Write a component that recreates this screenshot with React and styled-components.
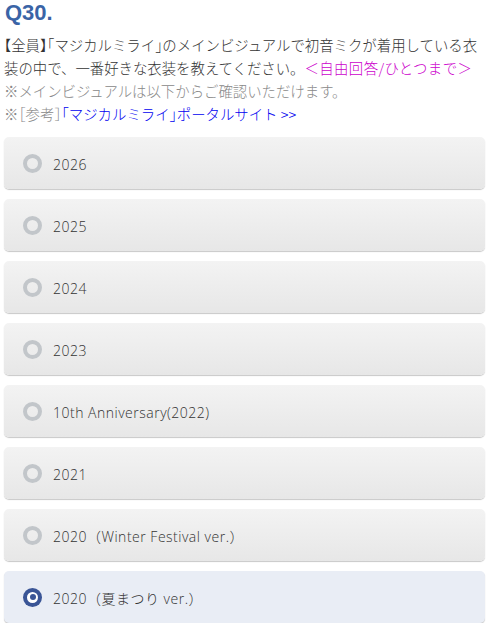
import React, { useState } from "react";
import styled, { createGlobalStyle } from "styled-components";

const GlobalStyle = createGlobalStyle`
  html, body { margin: 0; padding: 0; background: #fff; }
  body { font-family: "Noto Sans CJK JP", "Noto Sans", sans-serif; font-weight: 300; }
  * { box-sizing: border-box; }
`;

const Page = styled.div`
  padding: 0 8px 0 4px;
  width: 493px;
`;

const Heading = styled.h2`
  margin: 0;
  font-family: "Liberation Sans", Arial, sans-serif;
  font-weight: bold;
  font-size: 22px;
  line-height: 26px;
  color: #3a64a6;
  padding-left: 1px;
`;

const Question = styled.div`
  margin-top: 7px;
  font-size: 14.4px;
  line-height: 23px;
  color: #333;
  width: 485px;
`;

const Line = styled.div`
  white-space: nowrap;
  text-spacing-trim: space-all;
  color: ${(p) => p.$color || "#333"};
`;

const Note = styled.span`
  color: ${(p) => p.$color};
  letter-spacing: 0.4px;
`;

const Bracket = styled.span`
  font-feature-settings: "halt";
`;

const Link = styled.a`
  color: #0000f0;
  text-decoration: none;
`;

const Options = styled.div`
  margin-top: 12px;
  display: flex;
  flex-direction: column;
  gap: 10px;
`;

const Option = styled.label`
  display: flex;
  align-items: center;
  gap: 11px;
  height: 52px;
  padding-left: 19px;
  border-radius: 5px;
  cursor: pointer;
  background: ${(p) =>
    p.$selected ? "#e9edf5" : "linear-gradient(#f3f3f3, #e7e7e7)"};
  box-shadow: 0 1px 1px rgba(0, 0, 0, 0.22);
  color: #333;
`;

const Radio = styled.span`
  width: 19px;
  height: 19px;
  border-radius: 50%;
  flex: none;
  display: flex;
  align-items: center;
  justify-content: center;
  border: ${(p) => (p.$selected ? "none" : "4px solid #c2c6ca")};
  background: ${(p) => (p.$selected ? "#3a5596" : "transparent")};
`;

const RadioHole = styled.span`
  width: 11px;
  height: 11px;
  border-radius: 50%;
  background: #fff;
  display: flex;
  align-items: center;
  justify-content: center;
`;

const RadioDot = styled.span`
  width: 6px;
  height: 6px;
  border-radius: 50%;
  background: #3a5596;
`;

const Label = styled.span`
  font-family: "Open Sans", "Noto Sans CJK JP", sans-serif;
  font-weight: 300;
  font-size: 14px;
  letter-spacing: 0.5px;
  line-height: 20px;
  padding-top: 3px;
  text-spacing-trim: space-all;
`;

const B = ({ children }) => <Bracket>{children}</Bracket>;

const items = [
  "2026",
  "2025",
  "2024",
  "2023",
  "10th Anniversary(2022)",
  "2021",
  "2020（Winter Festival ver.）",
  "2020（夏まつり ver.）",
];

export default function App() {
  const [sel, setSel] = useState(7);
  return (
    <Page>
      <GlobalStyle />
      <Heading>Q30.</Heading>
      <Question>
        <Line>
          <B>【</B>全員<B>】「</B>マジカルミライ<B>」</B>
          のメインビジュアルで初音ミクが着用している衣
        </Line>
        <Line>
          装の中で、一番好きな衣装を教えてください。
          <Note $color="#cc00cc">＜自由回答/ひとつまで＞</Note>
        </Line>
        <Line $color="#888">※メインビジュアルは以下からご確認いただけます。</Line>
        <Line $color="#888">
          ※<B>［</B>参考<B>］</B>
          <Link href="#">
            <B>「</B>マジカルミライ<B>」</B>ポータルサイト &gt;&gt;
          </Link>
        </Line>
      </Question>
      <Options>
        {items.map((t, i) => (
          <Option key={t} $selected={sel === i} onClick={() => setSel(i)}>
            <Radio $selected={sel === i}>
              {sel === i && (
                <RadioHole>
                  <RadioDot />
                </RadioHole>
              )}
            </Radio>
            <Label>{t}</Label>
          </Option>
        ))}
      </Options>
    </Page>
  );
}
